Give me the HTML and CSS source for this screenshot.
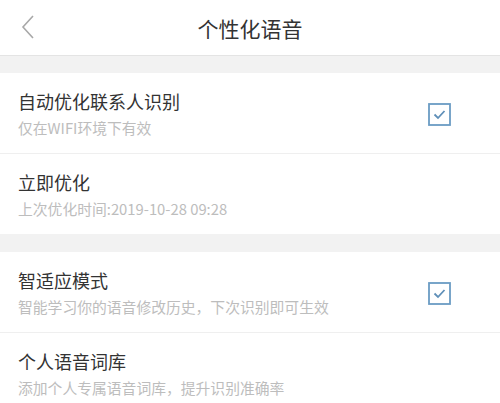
FILE: index.html
```html
<!DOCTYPE html>
<html>
  <head>
    <meta charset="utf-8">
    <title>个性化语音</title>
    <link rel="stylesheet" href="styles.css">
  </head>
  <body>
    <div class="header">
      <svg class="back" width="14" height="26" viewBox="0 0 14 26">
        <path d="M12 2 L2 13 L12 24" fill="none" stroke="#a8a8a8" stroke-width="1.6"/>
      </svg>
      <div class="title">个性化语音</div>
    </div>

    <div class="gap"></div>
    <div class="group">
      <div class="row">
        <div class="text">
          <div class="name">自动优化联系人识别</div>
          <div class="desc">仅在WIFI环境下有效</div>
        </div>
        <div class="check">
          <svg width="23" height="23" viewBox="0 0 23 23">
            <rect x="1" y="1" width="21" height="21" fill="none" stroke="#6b9cc4" stroke-width="1.8"/>
            <path d="M6.5 11.5 L10 15 L16.5 8" fill="none" stroke="#5f8fb8" stroke-width="1.8"/>
          </svg>
        </div>
      </div>
      <div class="row">
        <div class="text">
          <div class="name">立即优化</div>
          <div class="desc">上次优化时间:2019-10-28 09:28</div>
        </div>
      </div>
    </div>

    <div class="gap second"></div>
    <div class="group">
      <div class="row">
        <div class="text">
          <div class="name">智适应模式</div>
          <div class="desc">智能学习你的语音修改历史，下次识别即可生效</div>
        </div>
        <div class="check">
          <svg width="23" height="23" viewBox="0 0 23 23">
            <rect x="1" y="1" width="21" height="21" fill="none" stroke="#6b9cc4" stroke-width="1.8"/>
            <path d="M6.5 11.5 L10 15 L16.5 8" fill="none" stroke="#5f8fb8" stroke-width="1.8"/>
          </svg>
        </div>
      </div>
      <div class="row">
        <div class="text">
          <div class="name">个人语音词库</div>
          <div class="desc">添加个人专属语音词库，提升识别准确率</div>
        </div>
      </div>
    </div>
  </body>
</html>
```

FILE: styles.css
```css
body {
  margin: 0;
  background: #fff;
  font-family: "Noto Sans CJK SC", "Noto Sans", sans-serif;
  overflow: hidden;
}
.header {
  height: 55px;
  border-bottom: 1px solid #e4e4e4;
  display: flex;
  align-items: center;
  justify-content: center;
  position: relative;
}
.back {
  position: absolute;
  left: 21px;
  top: 14px;
}
.title {
  font-size: 21px;
  color: #333;
}
.gap {
  height: 17px;
  background: #f2f2f2;
}
.gap.second {
  height: 18px;
}
.row {
  height: 80px;
  display: flex;
  align-items: center;
  padding: 0 18px;
  border-bottom: 1px solid #efefef;
}
.group .row:last-child {
  border-bottom: none;
}
.text {
  flex: 1;
}
.name {
  font-size: 18px;
  color: #333;
  line-height: 26px;
}
.desc {
  font-size: 14.8px;
  color: #bdbdbd;
  line-height: 22px;
  margin-top: 3px;
}
.check {
  width: 23px;
  height: 23px;
  margin-right: 31px;
  margin-top: 2px;
}
```
